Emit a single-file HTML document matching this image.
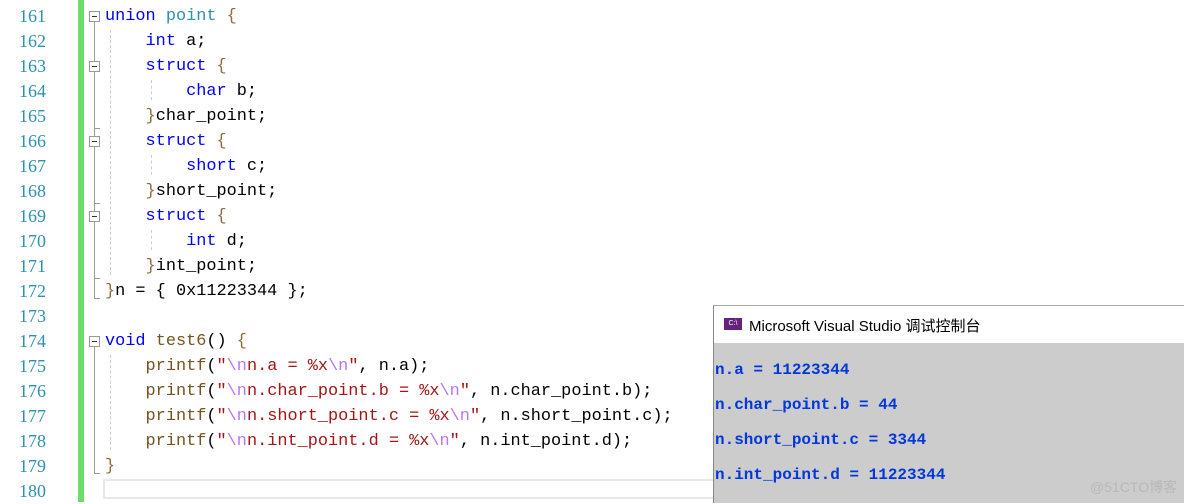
<!DOCTYPE html>
<html><head><meta charset="utf-8"><style>
body{margin:0;width:1184px;height:502px;overflow:hidden;background:#fff;position:relative;font-family:"Liberation Mono",monospace}
.ln{position:absolute;left:0;width:46px;text-align:right;color:#2b91af;font-family:"Liberation Serif",serif;font-size:18px;line-height:25px}
.c{position:absolute;left:105px;font-size:16.9px;line-height:25px;white-space:pre;color:#000}
.k{color:#0000ff}.f{color:#74531f}.s{color:#a31515}.e{color:#b776fb}.t{color:#2b91af}.b{color:#8a6d3b}
.fold{position:absolute;left:89px;width:11px;height:11px;border:1px solid #999;background:#fff;box-sizing:border-box}
.fold:after{content:"";position:absolute;left:2px;top:4px;width:5px;height:1px;background:#333}
.vl{position:absolute;left:94px;width:1px;background:#999}
.hl{position:absolute;left:94px;width:6px;height:1px;background:#999}
.dl{position:absolute;width:0;border-left:1px dashed #ccc}
.con{position:absolute;left:715px;font-size:16px;line-height:20px;color:#0037da;white-space:pre;font-weight:bold}
</style></head><body>
<div style="position:absolute;left:78px;top:0;width:6px;height:502px;background:#6ddc6d"></div>
<div class="ln" style="top:4px">161</div><div class="ln" style="top:29px">162</div><div class="ln" style="top:54px">163</div><div class="ln" style="top:79px">164</div><div class="ln" style="top:104px">165</div><div class="ln" style="top:129px">166</div><div class="ln" style="top:154px">167</div><div class="ln" style="top:179px">168</div><div class="ln" style="top:204px">169</div><div class="ln" style="top:229px">170</div><div class="ln" style="top:254px">171</div><div class="ln" style="top:279px">172</div><div class="ln" style="top:304px">173</div><div class="ln" style="top:329px">174</div><div class="ln" style="top:354px">175</div><div class="ln" style="top:379px">176</div><div class="ln" style="top:404px">177</div><div class="ln" style="top:429px">178</div><div class="ln" style="top:454px">179</div><div class="ln" style="top:479px">180</div>

<div class="fold" style="top:11px"></div><div class="vl" style="top:22px;height:276px"></div><div class="hl" style="top:298px"></div>
<div class="fold" style="top:61px"></div><div class="vl" style="top:72px;height:56px"></div><div class="hl" style="top:128px"></div>
<div class="fold" style="top:136px"></div><div class="vl" style="top:147px;height:56px"></div><div class="hl" style="top:203px"></div>
<div class="fold" style="top:211px"></div><div class="vl" style="top:222px;height:56px"></div><div class="hl" style="top:278px"></div>
<div class="fold" style="top:336px"></div><div class="vl" style="top:347px;height:126px"></div><div class="hl" style="top:473px"></div>
<div class="dl" style="left:110px;top:30px;height:245px"></div>
<div class="dl" style="left:151px;top:80px;height:20px"></div><div class="dl" style="left:151px;top:155px;height:20px"></div><div class="dl" style="left:151px;top:230px;height:20px"></div>
<div class="dl" style="left:110px;top:355px;height:95px"></div>

<div class="c" style="top:4px"><span class="k">union</span> <span class="t">point</span> <span class="b">{</span></div>
<div class="c" style="top:29px">    <span class="k">int</span> a;</div>
<div class="c" style="top:54px">    <span class="k">struct</span> <span class="b">{</span></div>
<div class="c" style="top:79px">        <span class="k">char</span> b;</div>
<div class="c" style="top:104px">    <span class="b">}</span>char_point;</div>
<div class="c" style="top:129px">    <span class="k">struct</span> <span class="b">{</span></div>
<div class="c" style="top:154px">        <span class="k">short</span> c;</div>
<div class="c" style="top:179px">    <span class="b">}</span>short_point;</div>
<div class="c" style="top:204px">    <span class="k">struct</span> <span class="b">{</span></div>
<div class="c" style="top:229px">        <span class="k">int</span> d;</div>
<div class="c" style="top:254px">    <span class="b">}</span>int_point;</div>
<div class="c" style="top:279px"><span class="b">}</span>n = { 0x11223344 };</div>
<div class="c" style="top:329px"><span class="k">void</span> <span class="f">test6</span>() <span class="b">{</span></div>
<div class="c" style="top:354px">    <span class="f">printf</span>(<span class="s">"</span><span class="e">\n</span><span class="s">n.a = %x</span><span class="e">\n</span><span class="s">"</span>, n.a);</div>
<div class="c" style="top:379px">    <span class="f">printf</span>(<span class="s">"</span><span class="e">\n</span><span class="s">n.char_point.b = %x</span><span class="e">\n</span><span class="s">"</span>, n.char_point.b);</div>
<div class="c" style="top:404px">    <span class="f">printf</span>(<span class="s">"</span><span class="e">\n</span><span class="s">n.short_point.c = %x</span><span class="e">\n</span><span class="s">"</span>, n.short_point.c);</div>
<div class="c" style="top:429px">    <span class="f">printf</span>(<span class="s">"</span><span class="e">\n</span><span class="s">n.int_point.d = %x</span><span class="e">\n</span><span class="s">"</span>, n.int_point.d);</div>
<div class="c" style="top:454px"><span class="b">}</span></div>
<div style="position:absolute;left:103px;top:479px;width:620px;height:20px;border:2px solid #e8e8ec;box-sizing:border-box"></div>

<div style="position:absolute;left:713px;top:305px;width:471px;height:197px;border-left:1px solid #888;border-top:1px solid #aaa;background:#cccccc">
<div style="height:37px;background:#fff;position:relative">
<div style="position:absolute;left:10px;top:12px;width:18px;height:12px;background:#68217a;color:#fff;font:7px 'Liberation Sans',sans-serif;line-height:12px;text-align:center">C:\</div>
<div style="position:absolute;left:35px;top:9px;font:15px 'Liberation Sans','Noto Sans CJK SC',sans-serif;color:#000">Microsoft Visual Studio 调试控制台</div>
</div></div>
<div class="con" style="top:360px">n.a = 11223344</div>
<div class="con" style="top:395px">n.char_point.b = 44</div>
<div class="con" style="top:430px">n.short_point.c = 3344</div>
<div class="con" style="top:465px">n.int_point.d = 11223344</div>
<div style="position:absolute;left:1090px;top:477px;font:14px 'Liberation Sans','Noto Sans CJK SC',sans-serif;color:#b8b8b8">@51CTO博客</div>
</body></html>
